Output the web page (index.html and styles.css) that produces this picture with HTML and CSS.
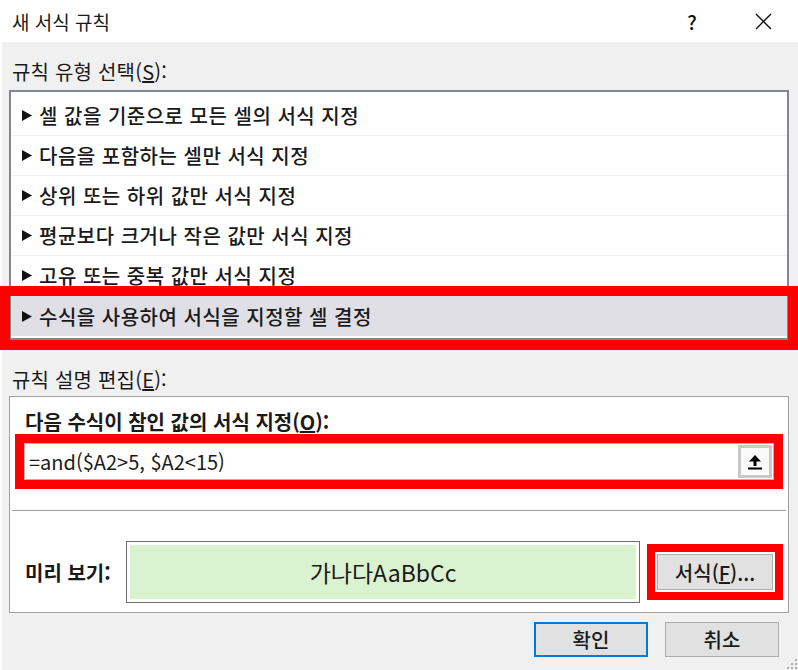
FILE: index.html
```html
<!DOCTYPE html>
<html lang="ko">
<head>
    <meta charset="UTF-8">
    <meta name="viewport" content="width=device-width, initial-scale=1.0">
    <title>새 서식 규칙</title>
    <link rel="stylesheet" href="styles.css">
</head>
<body>

    <div class="dialog">
        <div class="titlebar">
            <span class="title">새 서식 규칙</span>
            <span class="tb-btn help">?</span>
            <span class="tb-btn close">
                <svg width="17" height="17" viewBox="0 0 17 17">
                    <path d="M1 1 L16 16 M16 1 L1 16" stroke="#111" stroke-width="1.4" fill="none"/>
                </svg>
            </span>
        </div>

        <div class="body">
            <div class="label">규칙 유형 선택(<u>S</u>):</div>

            <ul class="rule-list">
                <li><svg class="arrow" width="10" height="11" viewBox="0 0 10 11"><path d="M0 0 L10 5.5 L0 11 Z"/></svg>셀 값을 기준으로 모든 셀의 서식 지정</li>
                <li><svg class="arrow" width="10" height="11" viewBox="0 0 10 11"><path d="M0 0 L10 5.5 L0 11 Z"/></svg>다음을 포함하는 셀만 서식 지정</li>
                <li><svg class="arrow" width="10" height="11" viewBox="0 0 10 11"><path d="M0 0 L10 5.5 L0 11 Z"/></svg>상위 또는 하위 값만 서식 지정</li>
                <li><svg class="arrow" width="10" height="11" viewBox="0 0 10 11"><path d="M0 0 L10 5.5 L0 11 Z"/></svg>평균보다 크거나 작은 값만 서식 지정</li>
                <li><svg class="arrow" width="10" height="11" viewBox="0 0 10 11"><path d="M0 0 L10 5.5 L0 11 Z"/></svg>고유 또는 중복 값만 서식 지정</li>
                <li class="selected"><svg class="arrow" width="10" height="11" viewBox="0 0 10 11"><path d="M0 0 L10 5.5 L0 11 Z"/></svg>수식을 사용하여 서식을 지정할 셀 결정</li>
            </ul>

            <div class="label label-edit">규칙 설명 편집(<u>E</u>):</div>

            <div class="edit-panel">
                <div class="bold-label">다음 수식이 참인 값의 서식 지정(<u>O</u>):</div>

                <div class="mark-input">
                    <div class="formula">
                        <span>=and($A2&gt;5, $A2&lt;15)</span>
                        <span class="collapse">
                            <svg width="14" height="16" viewBox="0 0 14 16">
                                <path d="M1 7.5 L7 1 L13 7.5 Z"/>
                                <rect x="5.5" y="6" width="3" height="6"/>
                                <rect x="0" y="13.5" width="14" height="2"/>
                            </svg>
                        </span>
                    </div>
                </div>

                <div class="sep"></div>

                <div class="preview-row">
                    <span class="pv-label">미리 보기:</span>
                    <div class="preview">
                        <div class="preview-in">가나다AaBbCc</div>
                    </div>
                    <div class="mark-btn">
                        <button class="btn format">서식(<u>F</u>)...</button>
                    </div>
                </div>
            </div>

            <div class="actions">
                <button class="btn primary">확인</button>
                <button class="btn">취소</button>
                <svg class="grip" width="13" height="13" viewBox="0 0 13 13">
                    <rect x="10" y="2" width="2" height="2"/>
                    <rect x="6" y="6" width="2" height="2"/>
                    <rect x="10" y="6" width="2" height="2"/>
                    <rect x="2" y="10" width="2" height="2"/>
                    <rect x="6" y="10" width="2" height="2"/>
                    <rect x="10" y="10" width="2" height="2"/>
                </svg>
            </div>
        </div>
    </div>

</body>
</html>
```

FILE: styles.css
```css
:root {
    --panel-bg: #f0f0f0;
    --text-color: #1a1a1a;
    --list-border: #828790;
    --frame-border: #a0a0a0;
    --mark-red: #ff0000;
    --select-bg: #e0dfe5;
    --preview-bg: #daf2d0;
    --button-bg: #e1e1e1;
    --accent-color: #0078d7;
}

body {
    margin: 0;
    background-color: #fff;
    font-family: "Noto Sans CJK KR", "Noto Sans", sans-serif;
    color: var(--text-color);
}

.dialog {
    width: 798px;
    height: 670px;
    display: flex;
    flex-direction: column;
}

/* 제목 표시줄 */
.titlebar {
    height: 42px;
    flex-shrink: 0;
    display: flex;
    align-items: center;
    padding-left: 12px;
    background-color: #fff;
    font-size: 19px;
}

.title {
    flex: 1;
}

.tb-btn {
    height: 42px;
    display: flex;
    align-items: center;
    justify-content: center;
}

.help {
    width: 74px;
    font-size: 20px;
    font-weight: 500;
    color: #111;
}

.close {
    width: 69px;
}

.body {
    flex: 1;
    margin-left: 2px;
    padding: 18px 9px 0 7px;
    background-color: var(--panel-bg);
    display: flex;
    flex-direction: column;
}

.label {
    font-size: 20px;
    line-height: 24px;
    margin-left: 3px;
    margin-bottom: 6px;
    letter-spacing: 0.2px;
}

.label-edit {
    margin-top: 28px;
    margin-bottom: 4px;
}

/* 규칙 유형 목록 */
.rule-list {
    list-style: none;
    margin: 0;
    padding: 4px 0 2px;
    height: 250px;
    box-sizing: border-box;
    border: 2px solid var(--list-border);
    background-color: #fff;
}

.rule-list li {
    height: 40px;
    box-sizing: border-box;
    display: flex;
    align-items: center;
    padding-left: 11px;
    border-bottom: 1px solid #f2f2f2;
    font-size: 20px;
    font-weight: 500;
    letter-spacing: 0.5px;
}

.arrow {
    margin-right: 7px;
    fill: #111;
    flex-shrink: 0;
}

.rule-list li.selected {
    position: relative;
    background-color: var(--select-bg);
    border-bottom: none;
}

/* 강조 표시(빨간 테두리) */
.rule-list li.selected::after {
    content: "";
    position: absolute;
    top: -10px;
    bottom: -14px;
    left: -11px;
    right: -11px;
    border: 10px solid var(--mark-red);
}

/* 규칙 설명 편집 영역 */
.edit-panel {
    border: 1px solid var(--frame-border);
    background-color: #fff;
    padding: 13px 5px 9px 5px;
}

.bold-label {
    font-size: 20px;
    line-height: 24px;
    font-weight: 700;
    margin-left: 10px;
}

.mark-input {
    border: 9px solid var(--mark-red);
}

.formula {
    height: 37px;
    box-sizing: border-box;
    border: 1px solid #b4b4b4;
    display: flex;
    align-items: center;
    padding-left: 4px;
    font-size: 20px;
}

.collapse {
    margin-left: auto;
    margin-right: 1px;
    width: 34px;
    height: 33px;
    box-sizing: border-box;
    border: 3px solid #c9c9c9;
    background-color: #fafafa;
    display: flex;
    align-items: center;
    justify-content: center;
}

.sep {
    height: 1px;
    margin: 21px -3px 0 -3px;
    background-color: var(--frame-border);
}

.preview-row {
    margin-top: 30px;
    height: 62px;
    display: flex;
    align-items: center;
}

.pv-label {
    width: 111px;
    box-sizing: border-box;
    padding-left: 10px;
    font-size: 20px;
    font-weight: 700;
}

.preview {
    width: 514px;
    height: 62px;
    box-sizing: border-box;
    border: 1px solid #6e6e6e;
    padding: 3px;
    background-color: #fff;
}

.preview-in {
    height: 100%;
    background-color: var(--preview-bg);
    display: flex;
    align-items: center;
    justify-content: center;
    font-size: 23px;
}

.mark-btn {
    margin-left: 7px;
    width: 136px;
    height: 56px;
    box-sizing: border-box;
    border: 8px solid var(--mark-red);
    padding: 2px;
    background-color: #fff;
}

/* 버튼 */
.btn {
    width: 114px;
    height: 35px;
    box-sizing: border-box;
    border: 1px solid #adadad;
    background-color: var(--button-bg);
    font-family: inherit;
    font-size: 20px;
    font-weight: 500;
    color: var(--text-color);
    padding: 0;
}

.btn.format {
    width: 100%;
    height: 100%;
}

.actions {
    flex: 1;
    display: flex;
    align-items: flex-start;
    margin: 9px -9px 0 0;
}

.actions .primary {
    margin-left: auto;
    border: 2px solid var(--accent-color);
}

.actions .btn + .btn {
    margin-left: 17px;
}

.grip {
    align-self: flex-end;
    margin-left: 6px;
    fill: #b0b0b0;
}
```
